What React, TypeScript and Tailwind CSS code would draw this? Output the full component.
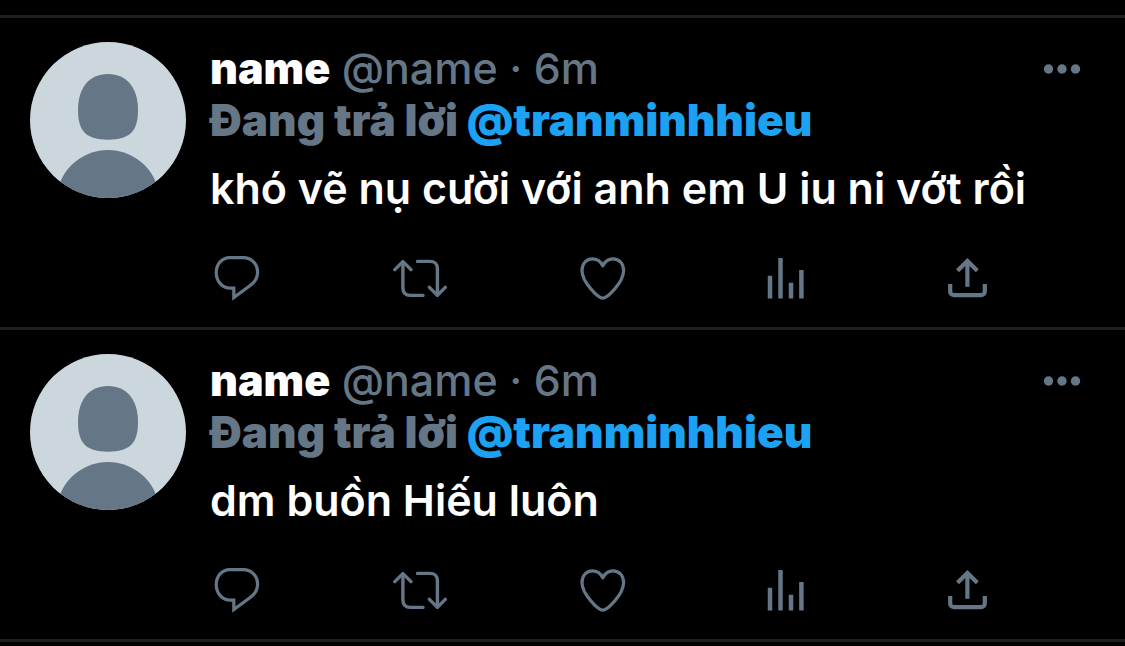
import React from "react";

interface Reply {
  id: string;
  name: string;
  handle: string;
  time: string;
  replyingTo: string;
  text: string;
}

const replies: Reply[] = [
  {
    id: "1",
    name: "name",
    handle: "@name",
    time: "6m",
    replyingTo: "@tranminhhieu",
    text: "khó vẽ nụ cười với anh em U iu ni vớt rồi",
  },
  {
    id: "2",
    name: "name",
    handle: "@name",
    time: "6m",
    replyingTo: "@tranminhhieu",
    text: "dm buồn Hiếu luôn",
  },
];

const Avatar: React.FC = () => (
  <div className="w-[156px] h-[156px] shrink-0 rounded-full overflow-hidden bg-[#ccd6dd]">
    <svg viewBox="0 0 156 156" className="w-full h-full" fill="#657786" aria-hidden="true">
      <path d="M78 32C97 32 108 46 108 68C108 89 100 97.7 78 97.7C56 97.7 48 89 48 68C48 46 59 32 78 32Z" />
      <circle cx="78" cy="159.6" r="51.6" />
    </svg>
  </div>
);

const actions = [
  {
    label: "Reply",
    icon: (
      <path
        d="M20 3.6H33.4C41.5 3.6 47.6 10 47.6 18C47.6 24 44.5 28.6 39.5 32L23.8 43.6V34.2H20.5C12 34.2 6.2 27 6.2 18.8C6.2 10 12 3.6 20 3.6Z"
        strokeWidth="3.2"
      />
    ),
  },
  {
    label: "Retweet",
    icon: (
      <g strokeWidth="3.4" strokeLinecap="round" strokeLinejoin="round">
        <path d="M1.8 15.6L9.9 7.6L18 15.6" />
        <path d="M9.9 8V34C9.9 38.5 12.5 41.4 17 41.4H30" />
        <path d="M24.5 7.4H37C41.5 7.4 44.4 10 44.4 14.5V41" />
        <path d="M36.4 33.4L44.4 41.4L52.3 33.4" />
      </g>
    ),
  },
  {
    label: "Like",
    icon: (
      <path
        d="M27.8 44.2C23.6 44.2 7 28.5 7 16.5C7 9.5 11.6 4.8 17.4 4.8C22 4.8 25.9 7.7 27.8 11.8C29.7 7.7 33.6 4.8 38 4.8C44 4.8 48.6 9.5 48.6 16.5C48.6 28.5 32 44.2 27.8 44.2Z"
        strokeWidth="3.2"
        strokeLinejoin="round"
      />
    ),
  },
  {
    label: "View activity",
    icon: (
      <path
        d="M12 21.7V44.5M22.5 4V44.5M33 28.7V44.5M43.4 16V44.5"
        strokeWidth="4.5"
      />
    ),
  },
  {
    label: "Share",
    icon: (
      <g strokeWidth="4.2">
        <path d="M17.5 16.8L27.4 6.9L37.3 16.8M27.4 7V32.7" />
        <path d="M10.2 30V37.2C10.2 39.6 11.8 41.2 14.2 41.2H40.8C43.2 41.2 44.8 39.6 44.8 37.2V30" />
      </g>
    ),
  },
];

const Tweet: React.FC<{ reply: Reply }> = ({ reply }) => {
  return (
    <article className="flex gap-6 border-t-[3px] border-[#1f1f1f] px-[30px] pt-6 pb-[25px]">
      <Avatar />

      <div className="flex-1 min-w-0 text-[43px] leading-[52px]">
        <div className="flex items-center justify-between pr-[14px]">
          <div className="text-[#657786] font-medium">
            <span className="text-white font-black">{reply.name}</span>{" "}
            {reply.handle} · {reply.time}
          </div>
          <button type="button" aria-label="More" className="shrink-0">
            <svg viewBox="0 0 38 12" className="w-[38px] h-3" fill="#657786">
              <circle cx="5.5" cy="7" r="4.7" />
              <circle cx="19" cy="7" r="4.7" />
              <circle cx="32.5" cy="7" r="4.7" />
            </svg>
          </button>
        </div>

        <div className="text-[#657786] text-[44px] leading-[52px] font-black">
          Đang trả lời{" "}
          <a href="#" className="text-[#1da1f2]">
            {reply.replyingTo}
          </a>
        </div>

        <p className="mt-4 text-white font-semibold">{reply.text}</p>

        <div className="mt-10 flex justify-between pr-[101px]">
          {actions.map((action) => (
            <button key={action.label} type="button" aria-label={action.label}>
              <svg
                viewBox="0 0 54 48"
                className="w-[54px] h-12"
                fill="none"
                stroke="#657786"
              >
                {action.icon}
              </svg>
            </button>
          ))}
        </div>
      </div>
    </article>
  );
};

export default function App() {
  return (
    <main className="min-h-screen bg-black pt-[15px] font-['Inter','Noto_Sans',sans-serif]">
      <div className="border-b-[3px] border-[#1f1f1f]">
        {replies.map((reply) => (
          <Tweet key={reply.id} reply={reply} />
        ))}
      </div>
    </main>
  );
}
